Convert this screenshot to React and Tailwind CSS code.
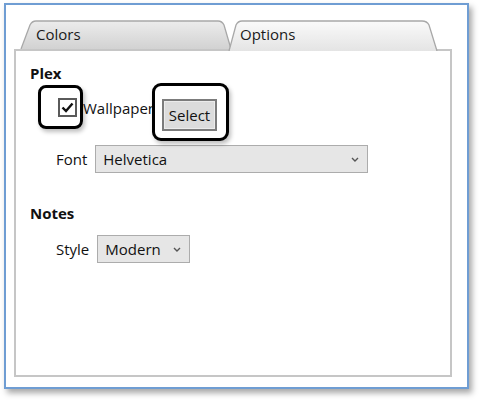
import { useState } from 'react'

const font = { fontFamily: '"Open Sans", "Noto Sans", sans-serif' }

const Tab = ({ label, active, width, onClick }) => {
  const h = active ? 31 : 29
  const path = active
    ? `M1,${h} L8,5 Q10,1 14,1 L${width - 16},1 Q${width - 11},1 ${width - 9},5 L${width - 1},${h}`
    : `M1,${h} L10,5 Q12,1 16,1 L${width - 14},1 Q${width - 10},1 ${width - 8},5 L${width - 1},${h}`
  const gid = active ? 'tabOn' : 'tabOff'
  return (
    <button
      onClick={onClick}
      className={
        active
          ? 'relative z-10 -ml-[4px] -mb-[2px] h-[31px] flex items-start pt-[3px] pl-[12px] text-[15px] text-[#1a1a1a]'
          : 'relative h-[29px] flex items-start pt-[3px] pl-[16px] text-[15px] text-[#1a1a1a]'
      }
      style={{ width }}
    >
      <svg
        className="absolute inset-0 w-full h-full"
        viewBox={`0 0 ${width} ${h}`}
        preserveAspectRatio="none"
      >
        <defs>
          <linearGradient id={gid} x1="0" y1="0" x2="0" y2="1">
            <stop offset="0" stopColor={active ? '#fafafa' : '#ececec'} />
            <stop offset="1" stopColor={active ? '#e4e4e4' : '#d2d2d2'} />
          </linearGradient>
        </defs>
        <path d={path} fill={`url(#${gid})`} stroke="#a8a8a8" strokeWidth="1.3" />
      </svg>
      <span className="relative">{label}</span>
    </button>
  )
}

const Chevron = () => (
  <svg width="8" height="5" viewBox="0 0 8 5" className="shrink-0">
    <path d="M1 1 L4 4 L7 1" fill="none" stroke="#555" strokeWidth="1.4" />
  </svg>
)

const Dropdown = ({ value, width }) => (
  <div
    className="h-[28px] flex items-center justify-between pl-[7px] pr-[8px] bg-[#e6e6e6] border border-[#acacac] text-[15px] text-[#111]"
    style={{ width }}
  >
    <span>{value}</span>
    <Chevron />
  </div>
)

export default function App() {
  const [tab, setTab] = useState('Options')
  const [checked, setChecked] = useState(true)

  return (
    <div className="w-[480px] h-[400px] bg-white pt-[3px] pl-[4px]" style={font}>
      <div className="w-[465px] h-[386px] border-2 border-[#6f9dd3] bg-white shadow-[3px_4px_6px_rgba(0,0,0,0.35)] pt-[15px] pl-[8px]">
        <div className="flex items-end h-[29px] pl-[6px]">
          <Tab label="Colors" width={212} active={tab === 'Colors'} onClick={() => setTab('Colors')} />
          <Tab label="Options" width={210} active={tab === 'Options'} onClick={() => setTab('Options')} />
        </div>

        <div className="w-[438px] h-[328px] border-2 border-[#c6c6c6] bg-white pt-[12px] text-[15px] text-[#111]">
          <div className="pl-[14px] font-bold leading-[20px]">Plex</div>

          <div className="flex items-start pl-[22px]">
            <div className="mt-[2px] w-[45px] h-[44px] border-[3px] border-black rounded-[8px] shadow-[2px_3px_4px_rgba(0,0,0,0.25)] pl-[17px] pt-[10px]">
              <button
                onClick={() => setChecked(!checked)}
                className="w-[19px] h-[19px] border-2 border-[#5a5a5a] bg-white flex items-center justify-center"
              >
                {checked && (
                  <svg width="13" height="11" viewBox="0 0 13 11">
                    <path d="M1.5 5.5 L5 9 L11.5 1.5" fill="none" stroke="#111" strokeWidth="2.4" />
                  </svg>
                )}
              </button>
            </div>
            <span className="mt-[15px] leading-[20px] whitespace-nowrap">Wallpaper</span>
            <div className="relative -ml-[2px] w-[77px] h-[58px] bg-white border-[3px] border-black rounded-[9px] shadow-[2px_3px_4px_rgba(0,0,0,0.25)] pl-[7px] pt-[13px]">
              <button className="w-[55px] h-[32px] bg-[#dcdcdc] border-2 border-[#7c7c7c] shadow-[inset_0_0_0_1px_#ececec] text-[15px] text-[#111] leading-none">
                Select
              </button>
            </div>
          </div>

          <div className="flex items-center gap-2 pl-[40px] mt-[4px]">
            <span>Font</span>
            <Dropdown value="Helvetica" width={273} />
          </div>

          <div className="pl-[14px] mt-[30px] font-bold leading-[20px]">Notes</div>

          <div className="flex items-center gap-2 pl-[40px] mt-[12px]">
            <span>Style</span>
            <Dropdown value="Modern" width={93} />
          </div>
        </div>
      </div>
    </div>
  )
}
